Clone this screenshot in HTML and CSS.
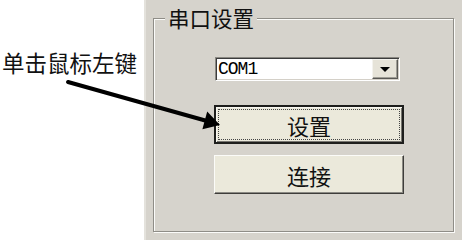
FILE: index.html
```html
<!DOCTYPE html>
<html lang="zh">
<head>
<meta charset="utf-8">
<link rel="stylesheet" href="styles.css">
</head>
<body>
<div class="page">
  <div class="side">
    <div class="hint">单击鼠标左键</div>
  </div>
  <div class="panel">
    <fieldset class="group">
      <legend class="title">串口设置</legend>
      <div class="controls">
        <div class="combo">
          <span class="combo-text">COM1</span>
          <span class="combo-btn"><span class="tri"></span></span>
        </div>
        <button class="btn btn-default"><span class="focus">设置</span></button>
        <button class="btn">连接</button>
      </div>
    </fieldset>
  </div>
  <svg class="arrow" width="462" height="240" viewBox="0 0 462 240">
    <line x1="68" y1="82" x2="207" y2="121" stroke="#000" stroke-width="4" stroke-linecap="round"/>
    <polygon points="220,125 207.2,111.6 202.4,129.2" fill="#000"/>
  </svg>
</div>
</body>
</html>
```

FILE: styles.css
```css
html, body {
  margin: 0;
  padding: 0;
  background: #fff;
}
.page {
  position: relative;
  width: 462px;
  height: 240px;
  display: flex;
  overflow: hidden;
}
.side {
  width: 144px;
  flex: none;
  padding-top: 49px;
  padding-left: 2px;
  box-sizing: border-box;
}
.hint {
  font-family: "Noto Sans CJK SC", sans-serif;
  font-size: 22.5px;
  line-height: 26px;
  color: #111;
  white-space: nowrap;
}
.panel {
  flex: 1;
  background: #d6d3cc;
  padding: 5px 8px 8px 7px;
  box-sizing: border-box;
  display: flex;
  border-left: 2px solid #e4e2dc;
}
.group {
  flex: 1;
  margin: 0;
  padding: 0;
  border: 1px solid #8f8d87;
  box-shadow: inset 1px 1px #fbfbf9, 1px 1px #fbfbf9;
  min-width: 0;
}
.title {
  margin-left: 11px;
  padding: 0 3px;
  font-family: "Noto Sans CJK SC", sans-serif;
  font-size: 21.5px;
  line-height: 26px;
  color: #111;
  background: #d6d3cc;
}
.controls {
  display: flex;
  flex-direction: column;
  align-items: flex-start;
  padding-top: 26px;
  padding-left: 61px;
}
.combo {
  width: 185px;
  height: 24px;
  box-sizing: border-box;
  background: #fff;
  border: 1px solid;
  border-color: #8a8882 #fff #fff #8a8882;
  box-shadow: inset 1px 1px #3c3c3c, inset -1px -1px #d4d0c8;
  display: flex;
  align-items: center;
  padding: 1px 1px 1px 2px;
}
.combo-text {
  flex: 1;
  font-family: "Liberation Mono", monospace;
  font-size: 18px;
  line-height: 20px;
  color: #000;
  letter-spacing: -1px;
}
.combo-btn {
  width: 26px;
  height: 20px;
  box-sizing: border-box;
  background: #e6e3d8;
  border: 1px solid;
  border-color: #f4f3ee #5a5955 #5a5955 #f4f3ee;
  box-shadow: inset -1px -1px #a09e96;
  display: flex;
  align-items: center;
  justify-content: center;
}
.tri {
  width: 0;
  height: 0;
  border-left: 5px solid transparent;
  border-right: 5px solid transparent;
  border-top: 5px solid #000;
}
.btn {
  width: 190px;
  height: 39px;
  margin: 11px 0 0 -1px;
  padding: 0;
  box-sizing: border-box;
  background: #ebe9db;
  border: 1px solid;
  border-color: #fbfbf8 #3e3d3a #3e3d3a #fbfbf8;
  box-shadow: inset -1px -1px #8c8a84;
  font-family: "Noto Sans CJK SC", sans-serif;
  font-size: 22px;
  line-height: 26px;
  color: #111;
  display: flex;
  align-items: center;
  justify-content: center;
}
.btn-default {
  margin-top: 24px;
  border: 2px solid #1e1e1c;
  box-shadow: inset 1px 1px #f8f7f2, inset -1px -1px #77756f;
  padding: 2px;
}
.focus {
  flex: 1;
  align-self: stretch;
  display: flex;
  align-items: center;
  justify-content: center;
  border: 1px dotted #444;
}
.arrow {
  position: absolute;
  left: 0;
  top: 0;
  pointer-events: none;
}
```
